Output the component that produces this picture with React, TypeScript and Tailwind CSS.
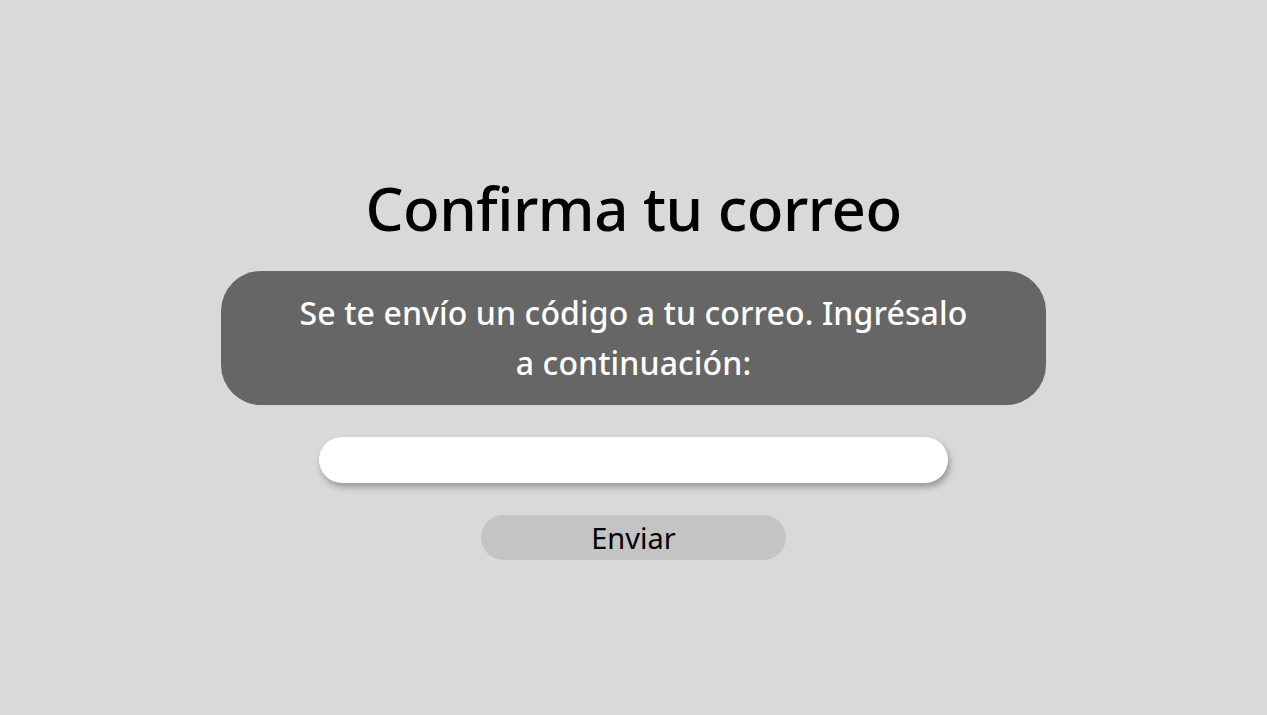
export default function App() {
  return (
    <div
      className="min-h-[715px] w-full bg-[#d9d9d9] flex flex-col items-center"
      style={{ fontFamily: '"Noto Sans", "Open Sans", sans-serif' }}
    >
      <h1 className="mt-[168px] text-[60px] leading-[80px] font-medium text-black tracking-[-0.5px]">
        Confirma tu correo
      </h1>

      <div className="mt-[23px] w-[825px] h-[134px] rounded-[40px] bg-[#666666] flex items-center justify-center">
        <p className="text-white text-[32px] leading-[50px] font-medium text-center w-[720px] tracking-[0.1px]">
          Se te envío un código a tu correo. Ingrésalo
          <br />
          a continuación:
        </p>
      </div>

      <input
        type="text"
        className="mt-[32px] w-[629px] h-[46px] rounded-full bg-white outline-none shadow-[2px_4px_6px_rgba(0,0,0,0.3)] px-5"
      />

      <button className="mt-[32px] w-[305px] h-[45px] rounded-full bg-[#c4c4c4] text-black text-[29px] leading-none">
        Enviar
      </button>
    </div>
  );
}
